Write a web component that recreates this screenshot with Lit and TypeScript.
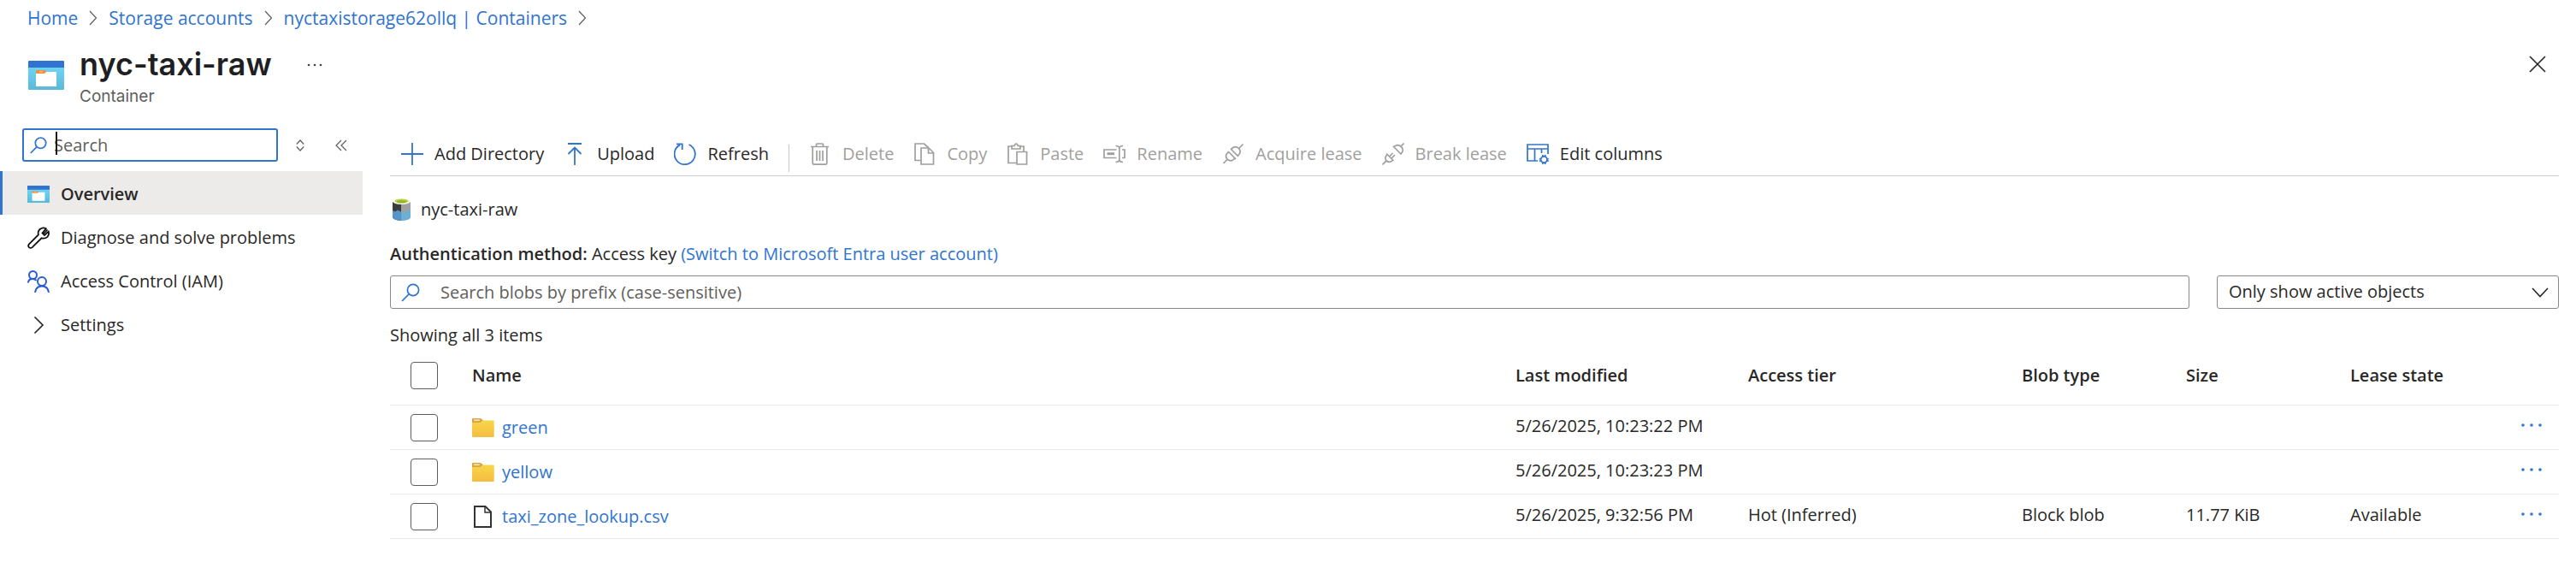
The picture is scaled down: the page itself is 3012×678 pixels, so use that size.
import { LitElement, html, css, svg, nothing, TemplateResult } from "lit";
import { customElement } from "lit/decorators.js";
import { classMap } from "lit/directives/class-map.js";

const containerIcon = (w: number, h: number) => html`<svg width=${w} height=${h} viewBox="0 0 42 34" preserveAspectRatio="none" aria-hidden="true">
  <defs><linearGradient id="sky" x1="0" y1="0" x2="0" y2="1"><stop offset="0" stop-color="#6fd6f5"></stop><stop offset="1" stop-color="#5cb8d8"></stop></linearGradient></defs>
  <rect y="6" width="42" height="28" rx="1" fill="url(#sky)"></rect>
  <path d="M1 0h40a1 1 0 0 1 1 1v7H0V1a1 1 0 0 1 1-1z" fill="#3074cf"></path>
  <path d="M10 13h22.500q.5 0 .5.500V29q0 1-1 1H10q-1 0-1-1V13z" fill="#fff"></path>
  <path d="M9.500 11h9l3 2-3 2h-9q-.5 0-.5-.5v-3q0-.5.500-.5z" fill="#ef8f35"></path>
  <rect x="13" y="12.300" width="4" height="1.200" fill="#fbd3a8"></rect>
</svg>`;

const line = (w: number, h: number, body: TemplateResult | unknown, stroke = 1.7) => html`<svg
  width=${w} height=${h} viewBox="0 0 ${w} ${h}" fill="none" stroke="currentColor" stroke-width=${stroke} aria-hidden="true">${body}</svg>`;

const searchIcon = line(22, 22, svg`<circle cx="14" cy="8" r="6.600"></circle><path d="M9.300 12.700L1 21"></path>`);

const icons: Record<string, TemplateResult> = {
  plus: line(26, 26, svg`<path d="M13 0v26M0 13h26"></path>`, 1.8),
  upload: line(26, 26, svg`<path d="M5 1h16M13 26V5.500M5.500 13L13 5.500l7.500 7.500"></path>`, 1.8),
  refresh: line(26, 26, svg`<path d="M17.500 2A12.100 12.100 0 1 1 7 2.400M3 1.300h6.700v6.700" ></path>`, 1.8),
  trash: line(26, 26, svg`<path d="M2 4.500h21M8.500 4V2q0-1 1-1h6q1 0 1 1v2M4.200 5v18.500q0 1.700 1.700 1.700h13.200q1.700 0 1.700-1.700V5"></path><path d="M9 9v12M12.500 9v12M16 9v12"></path>`),
  copy: line(26, 26, svg`<path d="M8.500 20.500H2V1h10.500l5 4.500"></path><path d="M9 6h9l5.500 5.500V25H9zM17.500 6v6H23.500"></path>`),
  paste: line(26, 26, svg`<path d="M11.500 23.500H2V4h4M15 4h5v6"></path><path d="M6 3.500h3.200q.5-2.500 2-2.500t2 2.500H16V7H6z"></path><path d="M12 10.500h11.500V25H12z"></path>`),
  rename: line(26, 26, svg`<path d="M15.500 8H1v9.500h14.500M22 8h3v9.500h-3"></path><path d="M4.500 12.700h8.500" stroke-width="3"></path><path d="M14.500 3.500q4.300 0 4.300 3v13q0 3-4.300 3M23.100 3.500q-4.300 0-4.300 3M23.100 22.500q-4.300 0-4.300-3"></path>`),
  acquire: line(26, 26, svg`<path d="M1.500 24l4.800-4.800M24.500 1.500L19.500 6.500"></path><path d="M7 10l9 9M10 7l9 9"></path><path d="M7.500 10.500l-1.700 1.800q-2.800 3.500.3 6.900 3.500 3.200 7 .4l2.200-2M10.500 7.500l2-1.800q3.500-2.600 6.800.6 3.200 3.500.6 7l-1.900 1.900"></path>`),
  breaklink: line(26, 26, svg`<path d="M.5 25.500l4.300-4.300M25.500.5L22 4"></path><path d="M5 12.500l8.500 8.500M6 13.500l-1.200 1.700q-2.100 3.200.4 5.800 2.800 2.500 6 .4l1.500-1.200"></path><path d="M8.500 16l4-4M10.500 18.500l4.500-4.500"></path><path d="M13.500 4.500l8.500 8.500 1.300-1.700q2.200-3.500-.8-6.700-3.400-3-7-1.200z"></path>`),
  columns: line(26, 26, svg`<path d="M13 21H1V2h24v11M1 7h24M9.500 7v14M17.500 7v5"></path><circle cx="20.300" cy="19.500" r="3.600"></circle><path d="M18.700 14l.5 2M21.900 14l-.5 2M18.700 25l.5-2M21.900 25l-.5-2M14.800 18.500l2 .5M14.900 21.500l2-1M25.800 18.500l-2 .5M25.700 21.500l-2-1"></path>`),
  wrench: line(26, 26, svg`<path d="M18.500 1.300q-5 .6-5.800 5.200-.2 1.500.2 3L2 20.300q-1.700 2-.1 3.800 1.800 1.500 3.800 0L16.600 13.300q4.200 1 6.900-1.500 2.300-2.500 1.200-6.200l-4.700 4.400-2.500-2.500 4.300-5.200q-1.500-1.100-3.300-1z"></path><path d="M18.700 8.500l4.800-5"></path>`, 1.8),
  people: line(26, 26, svg`<circle cx="6.500" cy="5.500" r="4.500"></circle><path d="M.8 14.500q.7-4.500 5.200-4.500 3 0 4.500 2"></path><circle cx="17" cy="13" r="5"></circle><path d="M9 26q1-7.500 8-7.500t8 7.500"></path>`, 2),
  chevron: line(26, 26, svg`<path d="M8.500 3.500L18 13l-9.500 9.500"></path>`, 1.7),
};

const folderIcon = html`<svg width="26" height="22" viewBox="0 0 26 22" aria-hidden="true">
  <defs><linearGradient id="fold" x1="0" y1="0" x2="0" y2="1"><stop offset="0" stop-color="#f8d548"></stop><stop offset="1" stop-color="#f5bd42"></stop></linearGradient></defs>
  <path d="M1 0h9l3 2.500L10 5H0V1q0-1 1-1z" fill="#dba33a"></path><rect x="2" y="1.200" width="7" height="2" fill="#f0dcae"></rect>
  <path d="M0 5h10.500L13 2.500h12q.7 0 .7.700V21q0 1-1 1H1q-1 0-1-1z" fill="url(#fold)"></path>
</svg>`;
const fileIcon = html`<svg width="26" height="26" viewBox="0 0 26 26" fill="none" stroke="#333" stroke-width="2" aria-hidden="true">
  <path d="M3 1h12.500L22 7.500V25H3z"></path><path d="M15 1v7h7" stroke-width="1.500"></path></svg>`;
const dots = html`<svg width="26" height="6" viewBox="0 0 26 6" fill="currentColor" aria-hidden="true"><circle cx="3" cy="3" r="1.800"></circle><circle cx="13" cy="3" r="1.800"></circle><circle cx="23" cy="3" r="1.800"></circle></svg>`;

const commands = [
  { label: "Add Directory", icon: "plus", on: true },
  { label: "Upload", icon: "upload", on: true },
  { label: "Refresh", icon: "refresh", on: true, end: true },
  { label: "Delete", icon: "trash", on: false },
  { label: "Copy", icon: "copy", on: false },
  { label: "Paste", icon: "paste", on: false },
  { label: "Rename", icon: "rename", on: false },
  { label: "Acquire lease", icon: "acquire", on: false },
  { label: "Break lease", icon: "breaklink", on: false },
  { label: "Edit columns", icon: "columns", on: true },
];

const blobs = [
  { name: "green", folder: true, modified: "5/26/2025, 10:23:22 PM", tier: "", type: "", size: "", lease: "" },
  { name: "yellow", folder: true, modified: "5/26/2025, 10:23:23 PM", tier: "", type: "", size: "", lease: "" },
  { name: "taxi_zone_lookup.csv", folder: false, modified: "5/26/2025, 9:32:56 PM", tier: "Hot (Inferred)", type: "Block blob", size: "11.77 KiB", lease: "Available" },
];

@customElement("app-root")
export class AppRoot extends LitElement {
  static styles = css`
    :host { display: block; background: #fff; color: #292827; font: 20px/28px "Open Sans", "Noto Sans", sans-serif; }
    * { box-sizing: border-box; }
    svg { display: block; flex: none; }
    a { color: #3074cf; text-decoration: none; }
    button { border: 0; background: none; padding: 0; margin: 0; color: inherit; font: inherit; display: flex; align-items: center; cursor: pointer; }
    .crumbs { display: flex; align-items: center; gap: 13px; padding: 7px 32px 0; font-size: 21px; }
    .crumbs svg { color: #605e5c; }
    .header { display: flex; align-items: flex-start; padding: 16px 34px 0 33px; height: 105px; }
    .header > svg { margin-top: 20px; }
    .titles { margin: 0 40px 0 18px; font-family: Inter, sans-serif; }
    h1 { margin: 0; font-size: 36px; line-height: 48px; font-weight: 600; color: #1f1f23; }
    .kind { font-size: 19px; line-height: 28px; color: #605e5c; }
    .more { margin-top: 21px; }
    .close { margin: 13px 0 0 auto; }
    .body { display: flex; align-items: flex-start; }
    .side { width: 424px; flex: none; padding-top: 10px; }
    .tools { display: flex; align-items: center; padding-left: 26px; color: #605e5c; }
    .find { position: relative; display: flex; align-items: center; width: 299px; height: 39px; border: 2px solid #3074cf; border-radius: 3px; padding-left: 7px; gap: 8px; }
    .find svg, .blobs svg { color: #3074cf; }
    .caret { position: absolute; left: 37px; top: 2px; width: 2px; height: 27px; background: #1b1a19; }
    input[type="text"] { flex: 1; min-width: 0; border: 0; outline: 0; padding: 0; background: none; color: inherit; font: inherit; }
    input::placeholder { color: #605e5c; opacity: 1; }
    .sort { margin-left: 21px; }
    .fold { margin-left: 36px; }
    .menu { list-style: none; margin: 11px 0 0; padding: 0; }
    .menu a { display: flex; align-items: center; gap: 13px; height: 51px; padding: 2px 0 0 32px; color: inherit; }
    .menu .on { background: #edebe9; box-shadow: inset 3px 0 #3074cf; font-weight: 600; }
    .people svg { color: #2a5bd7; }
    .wrench svg { color: #111; }
    .main { flex: 1; min-width: 0; padding: 14px 20px 0 32px; }
    .bar { display: flex; align-items: center; gap: 23px; height: 52px; padding-left: 13px; border-bottom: 1px solid #d2d0ce; }
    .bar button { gap: 13px; white-space: nowrap; }
    .bar svg { color: #3074cf; }
    .bar button:disabled, .bar button:disabled svg { color: #a19f9d; }
    .rule { width: 1px; height: 32px; background: #c8c6c4; align-self: flex-end; margin-bottom: 4px; }
    .place { display: flex; align-items: center; gap: 12px; padding: 25px 0 0 3px; }
    .auth { margin: 24px 0 11px; }
    .auth b { font-weight: 600; }
    .filters { display: flex; gap: 32px; }
    .blobs { flex: 1; display: flex; align-items: center; gap: 24px; height: 39px; border: 1px solid #8a8886; border-radius: 3px; padding-left: 12px; }
    .pick { position: relative; width: 400px; }
    select { appearance: none; width: 100%; height: 39px; border: 1px solid #8a8886; border-radius: 3px; background: #fff; padding: 0 40px 2px 13px; color: inherit; font: inherit; }
    .pick svg { position: absolute; right: 12px; top: 14px; pointer-events: none; }
    .count { margin: 17px 0 0; }
    table { width: 100%; table-layout: fixed; border-collapse: separate; border-spacing: 0; margin-top: 4px; }
    th, td { padding: 0; text-align: left; vertical-align: middle; height: 52px; border-bottom: 1px solid #edebe9; font-weight: 400; white-space: nowrap; }
    th { height: 64px; font-weight: 600; padding-bottom: 6px; }
    .c-check { width: 96px; } .c-mod { width: 272px; } .c-tier { width: 320px; } .c-type, .c-size { width: 192px; } .c-lease { width: 199px; } .c-act { width: 45px; }
    input[type="checkbox"] { appearance: none; display: block; width: 32px; height: 32px; margin: 0 0 0 24px; border: 1px solid #605e5c; border-radius: 4px; background: #fff; }
    .name { display: flex; align-items: center; gap: 9px; }
    td { padding-bottom: 3px; }
    td.pickcell, td.namecell { padding: 1px 0 0; }
    td.act { color: #3074cf; padding-bottom: 5px; }
    .act button { height: 28px; }
  `;

  render() {
    const sep = line(10, 20, svg`<path d="M1 2l7.500 8L1 18"></path>`, 1.2);
    return html`
      <nav class="crumbs" aria-label="Breadcrumb">
        <a href="#home">Home</a>${sep}<a href="#accounts">Storage accounts</a>${sep}<a href="#containers">nyctaxistorage62ollq | Containers</a>${sep}
      </nav>
      <header class="header">
        ${containerIcon(42, 34)}
        <div class="titles"><h1>nyc-taxi-raw</h1><div class="kind">Container</div></div>
        <button class="more" aria-label="More actions"><svg width="20" height="6" viewBox="0 0 20 6" fill="#444"><circle cx="3" cy="4" r="1.300"></circle><circle cx="10" cy="4" r="1.300"></circle><circle cx="17" cy="4" r="1.300"></circle></svg></button>
        <button class="close" aria-label="Close">${line(22, 22, svg`<path d="M2 2l18 18M20 2L2 20"></path>`, 1.7)}</button>
      </header>
      <div class="body">
        <aside class="side">
          <div class="tools">
            <div class="find">${line(20, 20, svg`<circle cx="12.500" cy="7.200" r="6.200"></circle><path d="M8 11.700L.8 19"></path>`)}
              <input type="text" placeholder="Search" aria-label="Search menu"><span class="caret"></span></div>
            <button class="sort" aria-label="Expand all">${line(10, 14, svg`<path d="M.8 5.500L5 1l4.200 4.500M.8 8.500L5 13l4.200-4.500"></path>`, 1.2)}</button>
            <button class="fold" aria-label="Collapse menu">${line(14, 14, svg`<path d="M7 1L1 7l6 6M13 1L7 7l6 6"></path>`, 1.2)}</button>
          </div>
          <ul class="menu">
            <li><a class="on" href="#overview">${containerIcon(26, 20)}Overview</a></li>
            <li><a class="wrench" href="#diagnose">${icons.wrench}Diagnose and solve problems</a></li>
            <li><a class="people" href="#iam">${icons.people}Access Control (IAM)</a></li>
            <li><a href="#settings">${icons.chevron}Settings</a></li>
          </ul>
        </aside>
        <main class="main">
          <div class="bar" role="toolbar">
            ${commands.map((c) => html`<button ?disabled=${!c.on}>${icons[c.icon]}${c.label}</button>${c.end ? html`<span class="rule"></span>` : nothing}`)}
          </div>
          <div class="place">
            <svg width="21" height="26" viewBox="0 0 21 26" aria-hidden="true">
              <path d="M0 4h10.500v22Q1 25.500 0 22z" fill="#3c3c3c"></path><path d="M10.500 4H21v18q-1 3.500-10.500 4z" fill="#a0a0a0"></path>
              <path d="M0 14l3 1.500 3-2 4.500 2.500v10Q1 25.500 0 22z" fill="#5596c8"></path><path d="M10.500 16l3 .5 2.500-2 5-1v8.500q-1 3.500-10.500 4z" fill="#6cb0d8"></path>
              <ellipse cx="10.500" cy="3.600" rx="10.500" ry="3.400" fill="#f4f4f4"></ellipse><ellipse cx="10.500" cy="3" rx="8" ry="2.600" fill="#b5d334"></ellipse><ellipse cx="10.500" cy="3.700" rx="5.500" ry="1.500" fill="#93b32b"></ellipse>
            </svg><span>nyc-taxi-raw</span>
          </div>
          <p class="auth"><b>Authentication method:</b> Access key <a href="#entra">(Switch to Microsoft Entra user account)</a></p>
          <div class="filters">
            <label class="blobs">${searchIcon}<input type="text" placeholder="Search blobs by prefix (case-sensitive)" aria-label="Search blobs by prefix"></label>
            <div class="pick"><select aria-label="Object filter"><option>Only show active objects</option></select>${line(20, 12, svg`<path d="M1 1l9 9.500L19 1"></path>`, 1.6)}</div>
          </div>
          <p class="count">Showing all 3 items</p>
          <table>
            <colgroup><col class="c-check"><col><col class="c-mod"><col class="c-tier"><col class="c-type"><col class="c-size"><col class="c-lease"><col class="c-act"></colgroup>
            <thead><tr><th><input type="checkbox" aria-label="Select all"></th><th>Name</th><th>Last modified</th><th>Access tier</th><th>Blob type</th><th>Size</th><th>Lease state</th><th></th></tr></thead>
            <tbody>
              ${blobs.map((b) => html`<tr class=${classMap({ folder: b.folder })}>
                <td class="pickcell"><input type="checkbox" aria-label="Select ${b.name}"></td>
                <td class="namecell"><span class="name">${b.folder ? folderIcon : fileIcon}<a href="#${b.name}">${b.name}</a></span></td>
                <td>${b.modified}</td><td>${b.tier}</td><td>${b.type}</td><td>${b.size}</td><td>${b.lease}</td>
                <td class="act"><button aria-label="More for ${b.name}">${dots}</button></td>
              </tr>`)}
            </tbody>
          </table>
        </main>
      </div>`;
  }
}
